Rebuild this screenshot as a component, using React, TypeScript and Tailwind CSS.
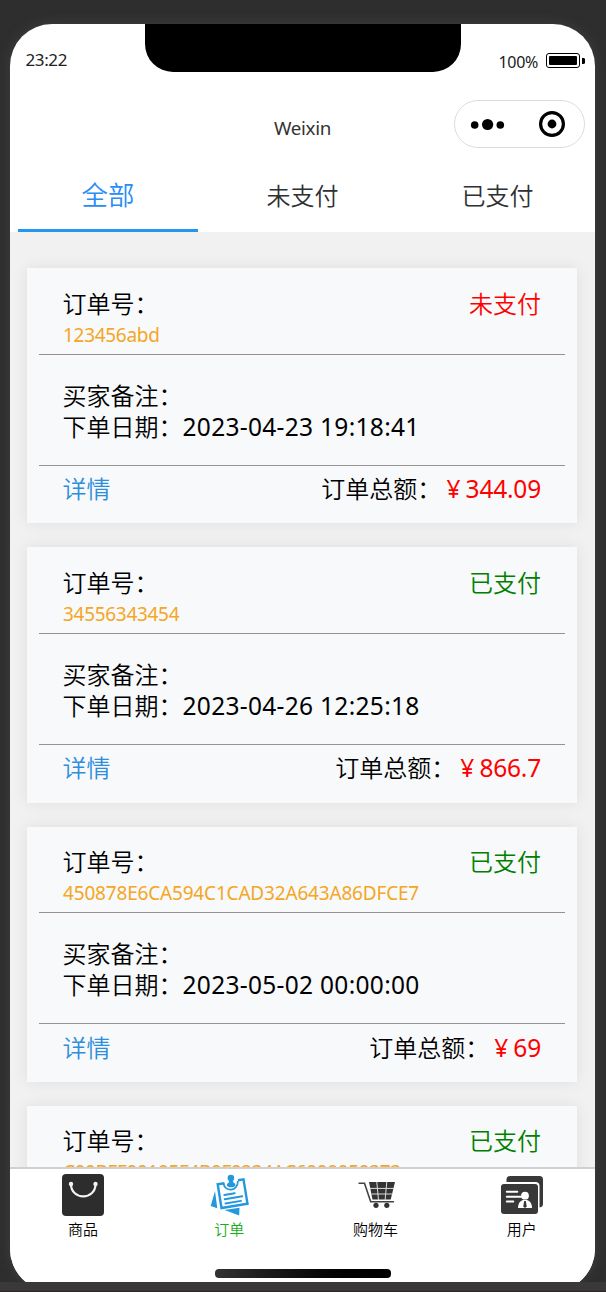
import React from "react";

type Order = { id: string; paid: boolean; date?: string; total?: string; tracking: string };

const orders: Order[] = [
  { id: "123456abd", paid: false, date: "2023-04-23 19:18:41", total: "344.09", tracking: "tracking-[-0.3px]" },
  { id: "34556343454", paid: true, date: "2023-04-26 12:25:18", total: "866.7", tracking: "tracking-[-0.3px]" },
  { id: "450878E6CA594C1CAD32A643A86DFCE7", paid: true, date: "2023-05-02 00:00:00", total: "69", tracking: "tracking-[-0.18px]" },
  { id: "C00BFF00105F4B0F0234AC6000050373", paid: true, tracking: "tracking-[-0.38px]" },
];

function StatusBar() {
  return (
    <div className="flex h-12 justify-between">
      <div className="w-[135px] pl-[15.5px] pt-[24px] text-[17px] font-normal leading-6 tracking-[-0.4px] text-[#222]">23:22</div>
      <div className="h-12 w-[316px] rounded-b-[28px] bg-black" />
      <div className="flex w-[134px] items-start justify-end pr-[10px] pt-[26px]">
        <span className="mr-[8px] text-[16px] font-normal leading-6 tracking-[-0.3px] text-[#222]">100%</span>
        <svg className="mt-[3px]" width="39" height="15" viewBox="0 0 39 15">
          <rect x="0.5" y="0.5" width="33" height="14" rx="2.5" fill="none" stroke="#000" />
          <rect x="3" y="3" width="28" height="9" rx="1" fill="#000" />
          <path d="M36 5h1.5a1.5 2.5 0 0 1 0 6H36z" fill="#000" />
        </svg>
      </div>
    </div>
  );
}

function NavBar() {
  return (
    <div className="grid h-[88px] grid-cols-[1fr_auto_1fr] items-start pr-[10px] pt-[28px]">
      <div />
      <div className="pl-[10px] pt-[16px] text-[18.8px] font-normal leading-6 tracking-[-0.3px] text-[#333]">Weixin</div>
      <div className="flex h-12 w-[131px] items-center justify-self-end rounded-full border border-[#dcdcdc]">
        <svg width="129" height="46" viewBox="0 0 129 46">
          <circle cx="19.7" cy="24" r="3.8" />
          <circle cx="32.6" cy="23.5" r="5.6" />
          <circle cx="45.3" cy="24" r="3.8" />
          <circle cx="97" cy="23" r="11.4" fill="none" stroke="#000" strokeWidth="3.2" />
          <circle cx="97" cy="23" r="4.4" />
        </svg>
      </div>
    </div>
  );
}

function Tabs() {
  return (
    <div className="grid h-[72px] grid-cols-3 text-center text-[24px] leading-[71px] text-[#2e3033]">
      <div className="flex flex-col text-[26.4px] text-[#2a8cf5]">
        <span className="h-[69px] pl-px leading-[71px]">全部</span>
        <span className="mx-auto h-[3px] w-[180px] bg-[#2196f3]" />
      </div>
      <div>未支付</div>
      <div>已支付</div>
    </div>
  );
}

function OrderCard({ order }: { order: Order }) {
  return (
    <article className="h-[255.25px] shrink-0 bg-[#f7f9fb] px-3 text-[24px] leading-[31px] shadow-[0_0_15px_rgba(0,20,10,0.08)]">
      <div className="h-[86.9px] border-b border-[#99908f] pl-[23.5px] pr-6 pt-[19.5px]">
        <div className="flex justify-between">
          <span>订单号：</span>
          <span className={order.paid ? "text-[#008000]" : "text-[#ff0000]"}>{order.paid ? "已支付" : "未支付"}</span>
        </div>
        <div className={"whitespace-nowrap pl-[0.5px] text-[19px] font-normal leading-[32px] text-[#f5a623] " + order.tracking}>{order.id}</div>
      </div>
      {order.date && (
        <div className="h-[111px] border-b border-[#969395] pl-[23.5px] pr-6 pt-[25px]">
          <div>买家备注：</div>
          <div className="flex whitespace-nowrap">
            <span>下单日期：</span>
            <span className="text-[24.5px] font-normal tracking-[0.3px]">{order.date}</span>
          </div>
        </div>
      )}
      {order.total && (
        <div className="flex justify-between pl-[23.5px] pr-6 pt-[7.3px]">
          <span className="text-[#2e8edb]">详情</span>
          <span className="flex">
            <span>订单总额：</span>
            <span className="text-[24.5px] font-normal tracking-[-0.2px] text-[#ff0000]">
              <span className="mx-[5.2px]">¥</span>
              {order.total}
            </span>
          </span>
        </div>
      )}
    </article>
  );
}

function BagIcon() {
  return (
    <svg width="44" height="44" viewBox="0 0 44 44">
      <rect x="1" y="1" width="42" height="42" rx="4" fill="#2d2d2d" />
      <path d="M10 11c0 16.5 24.500 16.500 24.500 0" fill="none" stroke="#f2f2f2" strokeWidth="2.200" />
      <circle cx="10" cy="11" r="2.200" fill="#f2f2f2" />
      <circle cx="34.500" cy="11" r="2.200" fill="#f2f2f2" />
    </svg>
  );
}

function NoteIcon() {
  return (
    <svg width="44" height="44" viewBox="0 0 44 44" fill="none" stroke="#2498de">
      <g transform="translate(3.500 1)">
        <path d="M14 9.200L7.200 10.200 11 34 37 29.800 33 5.300 27.500 6.200" strokeWidth="2.400" />
        <path d="M13 9.500C14.500 18.500 27.500 17.500 27.300 7" strokeWidth="1.800" />
        <path d="M13.800 21l10.500-1.800M14.300 25.300l17.500-3M15 29.500l15.500-2.600" strokeWidth="1.900" strokeLinecap="round" />
        <circle cx="20.400" cy="4" r="3.300" fill="#2498de" stroke="none" />
        <path d="M18.600 6.500h3.800l.5 2c1.800.8 2.200 1.800 2 3.200-2.500 2.200-6.300 2.200-8.500 0 0-1.500.4-2.500 2-3.200z" fill="#2498de" stroke="none" />
        <path d="M4.500 17L.2 32l6.600 2.200zM14 36l15-2.200-.3 7.700z" fill="#2498de" stroke="none" />
      </g>
    </svg>
  );
}

function CartIcon() {
  return (
    <svg width="44" height="44" viewBox="0 0 44 44">
      <path d="M4.500 10.200h6l6.200 18.500H40" fill="none" stroke="#444" strokeWidth="1.600" />
      <path d="M15 9h26l-4.300 17.500H18.500z" fill="#333" />
      <path d="M16 15.400h24M17.500 21h21M22.800 9l1.700 18M32.800 9l-1.700 18" fill="none" stroke="#ddd" strokeWidth="1" />
      <circle cx="22" cy="32.300" r="2.600" fill="#333" />
      <circle cx="32.800" cy="32.300" r="2.600" fill="#333" />
    </svg>
  );
}

function UserIcon() {
  return (
    <svg width="44" height="44" viewBox="0 0 44 44">
      <path d="M6.500 9V6.500A3.500 3.500 0 0 1 10 3h29.500A3.500 3.500 0 0 1 43 6.500v24.500q0 3-3.500 3.500V13q0-4-4-4z" fill="#383838" />
      <rect x="1" y="11" width="37" height="30" rx="3" fill="#383838" />
      <path d="M6.800 18.800h10.500M6.800 23.700h14.500M6.800 28.500h6.500" stroke="#fff" strokeWidth="2" strokeLinecap="round" />
      <circle cx="25" cy="22.700" r="3.900" fill="#fff" />
      <path d="M18 35c0-5 2.500-7.500 5.500-8h3c3 .5 5.500 3 5.500 8z" fill="#fff" />
      <path d="M24.200 28h1.600l1 5.500-1.800 1.500-1.800-1.500z" fill="#383838" />
    </svg>
  );
}

const navItems = [
  { label: "商品", icon: <BagIcon />, color: "text-black" },
  { label: "订单", icon: <NoteIcon />, color: "text-[#1aad19]" },
  { label: "购物车", icon: <CartIcon />, color: "text-black" },
  { label: "用户", icon: <UserIcon />, color: "text-black" },
];

function TabBar() {
  return (
    <nav className="h-[115px] border-t-2 border-[#d0d0d2] bg-white">
      <div className="grid h-[104px] grid-cols-4">
        {navItems.map((item) => (
          <div key={item.label} className={"flex flex-col items-center pt-[4px] text-[15px] leading-[25px] " + item.color}>
            {item.icon}
            <span>{item.label}</span>
          </div>
        ))}
      </div>
      <div className="mx-auto mt-[-4px] h-[9px] w-[176px] rounded-[4px] bg-gradient-to-r from-[#333] to-black" />
    </nav>
  );
}

export default function App() {
  return (
    <div className="flex h-[1292px] w-[606px] flex-col overflow-hidden bg-[#2e2e2e] font-['Noto_Sans','Noto_Sans_CJK_SC',sans-serif] font-[350] text-black">
      <div className="h-[1282px] overflow-hidden pl-[10px] pt-[24px]">
        <div className="flex h-[1267px] w-[585px] flex-col overflow-hidden rounded-[42px] bg-white shadow-[0_0_12px_#404040]">
          <StatusBar />
          <NavBar />
          <Tabs />
          <main className="flex h-[935px] flex-col gap-[24px] overflow-hidden bg-[#f1f1f1] pl-[17px] pr-[18px] pt-[36px]">
            {orders.map((order) => (
              <OrderCard key={order.id} order={order} />
            ))}
          </main>
          <TabBar />
        </div>
      </div>
      <div className="h-[10px] border-b border-[#2d2628] bg-[#393939]" />
    </div>
  );
}
